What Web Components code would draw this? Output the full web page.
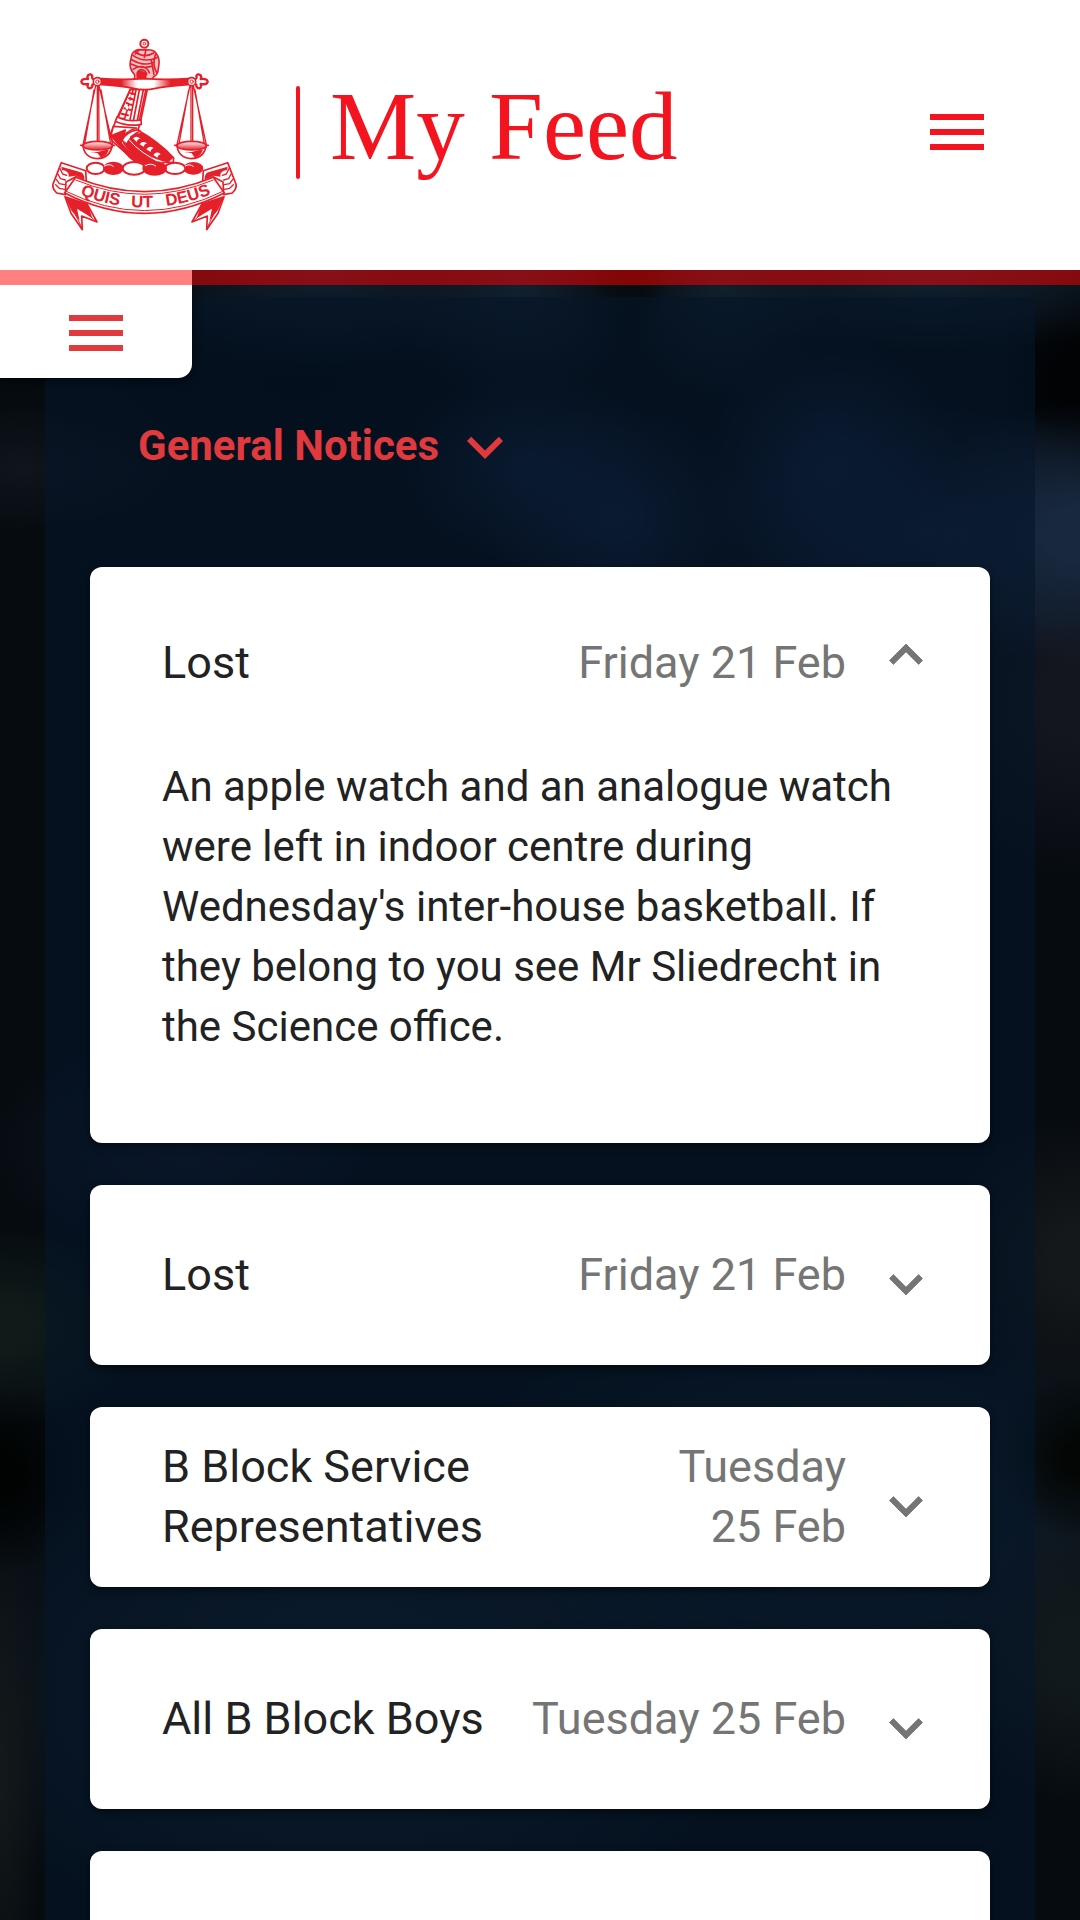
<!DOCTYPE html>
<html lang="en">
<head>
<meta charset="utf-8">
<meta name="viewport" content="width=device-width, initial-scale=1">
<title>My Feed</title>
<style>
  body { margin: 0; background: #05090d; font-family: Roboto, "Noto Sans", sans-serif; }
</style>
</head>
<body>
<feed-app>
  <app-header slot="header">My Feed</app-header>
  <notice-group>
    <span slot="heading">General Notices</span>
    <notice-card open>
      <span slot="title">Lost</span>
      <span slot="date">Friday 21 Feb</span>
      <p style="margin:0">An apple watch and an analogue watch were left in indoor centre during Wednesday's inter-house basketball. If they belong to you see Mr Sliedrecht in the Science office.</p>
    </notice-card>
    <notice-card>
      <span slot="title">Lost</span>
      <span slot="date">Friday 21 Feb</span>
    </notice-card>
    <notice-card>
      <span slot="title">B Block Service Representatives</span>
      <span slot="date">Tuesday 25 Feb</span>
    </notice-card>
    <notice-card>
      <span slot="title">All B Block Boys</span>
      <span slot="date">Tuesday 25 Feb</span>
    </notice-card>
    <notice-card></notice-card>
  </notice-group>
</feed-app>

<script>
function define(name, html, setup) {
  const template = document.createElement('template');
  template.innerHTML = html;
  customElements.define(name, class extends HTMLElement {
    constructor() {
      super();
      this.attachShadow({ mode: 'open' }).append(template.content.cloneNode(true));
    }
    connectedCallback() { if (setup) setup(this, this.shadowRoot); }
  });
}

define('menu-button', `
<style>
  :host { display: block; }
  button { display: block; margin: 0; padding: 0; border: 0; background: none; color: inherit; cursor: pointer; }
  svg { display: block; width: 72px; height: 72px; fill: currentColor; }
</style>
<button type="button" aria-label="Menu">
  <svg viewBox="0 0 24 24" aria-hidden="true"><path d="M3 6h18v2H3zM3 11h18v2H3zM3 16h18v2H3z"/></svg>
</button>`);

define('school-crest', `
<style>
  :host { display: block; }
  svg { display: block; width: 185px; height: 198px; }
  text { font: bold 50px "Liberation Sans", Arial, sans-serif; fill: #e5202a; }
</style>
<svg viewBox="66 39 555 594" fill="none" stroke="#e5202a" stroke-width="5" stroke-linejoin="round" stroke-linecap="round">
  <defs>
    <linearGradient id="beam">
      <stop offset="0" stop-color="#e5202a"/><stop offset=".25" stop-color="#e5202a"/>
      <stop offset=".42" stop-color="#fff"/><stop offset=".6" stop-color="#fff"/>
      <stop offset=".78" stop-color="#e5202a"/><stop offset="1" stop-color="#e5202a"/>
    </linearGradient>
    <linearGradient id="bowl" x1="0" y1="1" x2="0" y2="0">
      <stop offset="0" stop-color="#e5202a"/><stop offset="1" stop-color="#fff"/>
    </linearGradient>
  </defs>
  <!-- gauntlet -->
  <path d="M312 178Q318 166 309 158Q298 144 301 124L306 103Q312 91 327 89L362 90Q374 91 379 101Q389 114 387 132L384 153Q382 166 370 171L367 180Z" fill="#f9c4c7"/>
  <path d="M316 96Q343 116 371 99M309 106Q344 130 380 113M305 119Q340 139 368 128M303 132Q334 148 364 139M309 148Q326 136 341 141Q354 146 358 158M322 173Q318 151 333 149Q347 150 350 162M376 104Q366 132 380 158M364 120L372 164M327 90L316 102M348 88L343 112" stroke-width="5"/>
  <path d="M320 157Q336 146 352 162L348 176H322Z" fill="#e5202a" stroke="none"/>
  <circle cx="343" cy="71" r="12" fill="#fff" stroke-width="6"/><circle cx="343" cy="71" r="4" stroke-width="3"/>
  <!-- arm -->
  <path d="M301 208L262 292L254 311L240 345L248 364L323 431L430 426L431 414Q388 367 324 331L331 307L352 208Z" fill="#fff"/>
  <path d="M301 208L264 294L284 296L310 208ZM318 210L300 299M328 210L310 303M340 210L321 306M347 212L327 306" stroke-width="5"/>
  <path d="M302 220L315 223M297 235L312 239M290 249L306 255M283 265L301 270M275 281L294 286" stroke-width="6"/>
  <path d="M304 224l7 2-3 8-7-3zM298 241l7 2-3 8-7-3zM290 257l7 3-4 9-6-3z" fill="#fff" stroke="none"/>
  <path d="M262 290Q290 307 333 300L334 313Q292 321 256 304Z" fill="#fff"/>
  <path d="M250 319L320 324Q281 333 270 369L243 346Z" fill="#fff"/>
  <path d="M243 347L286 330L273 369L292 391L319 426L300 413Z" fill="#e5202a"/>
  <path d="M281 368L322 425L382 430L326 378Q307 357 300 352Z" fill="#e5202a"/>
  <path d="M276 361Q286 337 323 329L330 333Q300 348 290 373Z" fill="#fff"/>
  <path d="M303 350Q319 341 337 341Q387 373 428 412L414 424Q379 420 345 397Q312 373 303 350Z" fill="#e5202a"/>
  <path d="M309 355q10-10 22 1-9 1-11 10zM329 373q8-13 22-3-9 2-10 10zM349 388q8-13 22-4-9 3-9 12zM370 405q9-13 22-3-9 3-10 11z" fill="#fff" stroke="none"/>
  <path d="M297 359Q331 401 397 430" stroke="#fff" stroke-width="3"/>
  <!-- beam -->
  <path d="M203 175Q280 181 343 176Q410 181 484 175V193Q405 199 377 205Q343 213 310 205Q277 197 203 193Z" fill="url(#beam)"/>
  <path d="M192 178Q184 176 187 168Q183 160 175 165Q170 171 174 177Q155 175 154 185Q155 195 174 192Q170 202 178 205Q188 204 187 194L193 192ZM494 178Q502 176 499 168Q503 160 511 165Q516 171 512 177Q532 175 533 185Q531 195 512 192Q516 202 508 205Q498 204 499 194L493 192Z" fill="#fff" stroke-width="7"/>
  <circle cx="202" cy="185" r="12" fill="#fff" stroke-width="5"/><circle cx="202" cy="185" r="5" stroke-width="3"/>
  <circle cx="485" cy="185" r="12" fill="#fff" stroke-width="5"/><circle cx="485" cy="185" r="5" stroke-width="3"/>
  <!-- scales -->
  <path d="M197 197L159 374M192 210L164 372M202 197V368M206 197L207 368M207 197L248 374M213 210L242 372M480 197L441 374M476 210L447 372M483 197V368M488 197V368M490 197L529 374M495 210L523 372" stroke-width="4"/>
  <path d="M159 375Q162 414 202 416Q241 414 247 375Z" fill="#fff"/>
  <path d="M168 390Q187 402 214 393L237 388Q230 411 212 412L202 399Q184 400 168 390Z" fill="#e5202a" stroke="none"/>
  <ellipse cx="203" cy="377" rx="44" ry="13" fill="url(#bowl)"/>
  <path d="M441 375Q444 414 484 416Q523 414 529 375Z" fill="#fff"/>
  <path d="M450 390Q469 402 496 393L519 388Q512 411 494 412L484 399Q466 400 450 390Z" fill="#e5202a" stroke="none"/>
  <ellipse cx="485" cy="377" rx="44" ry="13" fill="url(#bowl)"/>
  <path d="M159 376h-7M248 376h6M441 376h-7M529 376h6"/>
  <!-- wreath -->
  <g stroke-width="6">
    <ellipse cx="197" cy="445" rx="27" ry="17" fill="#fff"/>
    <ellipse cx="250" cy="445" rx="28" ry="17" fill="#e5202a"/>
    <ellipse cx="490" cy="445" rx="27" ry="16" fill="#e5202a"/>
    <ellipse cx="312" cy="445" rx="34" ry="19" fill="#fff"/>
    <ellipse cx="435" cy="445" rx="31" ry="17" fill="#fff"/>
    <ellipse cx="374" cy="445" rx="34" ry="19" fill="#e5202a"/>
  </g>
  <path d="M223 438q17-9 27 1M346 437q17-10 31 1M466 438q12-8 24 1" stroke="#fff" stroke-width="3"/>
  <!-- ribbon -->
  <path d="M105 530L123 580L157 629L155 588L201 606L171 552ZM582 530L564 580L530 629L532 588L486 606L516 552Z" fill="#fff"/>
  <path d="M105 530L123 570L149 602L141 566L187 594L173 552ZM582 530L564 570L538 602L546 566L500 594L514 552Z" fill="#e5202a" stroke="none"/>
  <path d="M120 550L155 622M140 555L196 602M567 550L532 622M547 555L491 602" stroke-width="3"/>
  <path d="M94 428L167 452L169 485L138 470L108 486L106 524L80 519Q62 503 72 485ZM593 428L520 452L518 485L549 470L579 486L581 524L607 519Q625 503 615 485Z" fill="#fff"/>
  <path d="M94 440L150 456Q164 459 163 479L137 467L116 470Q119 453 96 450ZM593 440L537 456Q523 459 524 479L550 467L571 470Q568 453 591 450Z" fill="#e5202a" stroke="none"/>
  <path d="M90 446L98 462L110 466M84 462L91 476L106 480M79 478L88 491L104 494M77 494L88 505L104 508M597 446L589 462L577 466M603 462L596 476L581 480M608 478L599 491L583 494M610 494L599 505L583 508" stroke-width="4"/>
  <path d="M137 472Q343 558 550 472L583 519Q343 641 104 519Z" fill="#fff"/>
  <path d="M137 480Q343 566 550 480M106 513Q343 631 581 513" stroke-width="3"/>
  <path id="motto" d="M139 519Q343 607 559 516" stroke="none"/>
  <text stroke="none" text-anchor="middle"><textPath href="#motto" startOffset="17%">QUIS</textPath></text>
  <text stroke="none" text-anchor="middle"><textPath href="#motto" startOffset="47%">UT</textPath></text>
  <text stroke="none" text-anchor="middle"><textPath href="#motto" startOffset="80%">DEUS</textPath></text>
</svg>`);

define('app-header', `
<style>
  :host { display: block; background: #fff; color: #f3141f; }
  header { display: flex; align-items: center; box-sizing: border-box; height: 270px; padding: 0 87px 6px 52px; }
  .rule { width: 4px; height: 93px; margin: 0 30px 0 59px; border-radius: 2px; background: currentColor; }
  h1 { flex: 1; margin: 0; padding-bottom: 10px; font: 400 97px/120px "Liberation Serif", "Times New Roman", serif; white-space: nowrap; }
</style>
<header>
  <school-crest></school-crest>
  <span class="rule"></span>
  <h1><slot></slot></h1>
  <menu-button></menu-button>
</header>`);

define('feed-app', `
<style>
  :host { display: flex; flex-direction: column; height: 100vh; overflow: hidden; }
  main {
    flex: 1; min-height: 0; position: relative; overflow: hidden auto; scrollbar-width: none;
    background:
      radial-gradient(ellipse 16% 8% at 100% 16%, #18283d 20%, transparent),
      radial-gradient(ellipse 12% 7% at 57% 15%, #13233f, transparent),
      radial-gradient(ellipse 12% 6% at 49% 12%, #11203a, transparent),
      radial-gradient(ellipse 12% 8% at 77% 12%, #12233f, transparent),
      radial-gradient(ellipse 22% 8% at 86% 16%, #13233f, transparent),
      radial-gradient(ellipse 12% 7% at 48% 1%, #12202f, transparent),
      radial-gradient(ellipse 5% 5% at 57% 0%, #030505, transparent),
      radial-gradient(ellipse 10% 7% at 67% 1%, #11202c, transparent),
      radial-gradient(ellipse 20% 6% at 30% 0%, #11202f, transparent),
      radial-gradient(ellipse 24% 5% at 86% 0%, #122433, transparent),
      radial-gradient(ellipse 8% 7% at 100% 7%, #010305 30%, transparent),
      radial-gradient(ellipse 26% 6% at 28% 7%, #02070b, transparent),
      radial-gradient(ellipse 16% 4% at 2% 12%, #10151c, transparent),
      radial-gradient(ellipse 18% 11% at 100% 26%, #14161e 20%, transparent),
      radial-gradient(ellipse 18% 7% at 17% 53%, #12192a, transparent),
      radial-gradient(ellipse 14% 6% at 0% 64%, #101b19 20%, transparent),
      radial-gradient(ellipse 8% 6% at 0% 73%, #010302 20%, transparent),
      radial-gradient(ellipse 8% 5% at 100% 72%, #030604 20%, transparent),
      radial-gradient(ellipse 14% 9% at 100% 60%, #15181a 20%, transparent),
      radial-gradient(ellipse 14% 9% at 100% 84%, #12191c 20%, transparent),
      radial-gradient(ellipse 4% 16% at 0% 91%, #13181a 10%, transparent),
      radial-gradient(ellipse 40% 16% at 32% 86%, #162734, transparent),
      radial-gradient(ellipse 40% 14% at 78% 76%, #132331, transparent),
      #060b10;
  }
  .bar { height: 15px; background: rgba(255, 0, 0, .5); }
  .tab {
    position: absolute; z-index: 1; top: 15px; left: 0; padding: 12px 60px 9px;
    background: #fff; color: #e0393e; border-radius: 0 0 14px 0; box-shadow: 0 3px 9px rgba(0, 0, 0, .5);
    clip-path: inset(0 -20px -20px 0);
  }
  .corner { position: absolute; top: 0; left: 0; width: 192px; height: 15px; background: #ff8080; }
  .content { padding: 12px 45px 0; }
</style>
<slot name="header"></slot>
<main>
  <div class="bar"></div>
  <div class="corner"></div>
  <nav class="tab"><menu-button></menu-button></nav>
  <div class="content"><slot></slot></div>
</main>`);

define('notice-group', `
<style>
  :host { display: block; padding: 108px 45px 42px; border-radius: 12px; background: rgba(5, 22, 42, .6); }
  h2 { margin: 0 0 78px; font: inherit; }
  button {
    display: flex; align-items: center; gap: 10px; height: 84px; margin: 0; padding: 0 48px; border: 0;
    background: none; color: #e0393e; font: 700 42px/60px Roboto, sans-serif; cursor: pointer;
  }
  slot[name] { display: block; padding-bottom: 3px; }
  svg { display: block; width: 72px; height: 72px; fill: currentColor; }
  .list { display: flex; flex-direction: column; gap: 42px; }
</style>
<h2><button type="button" aria-haspopup="true">
  <slot name="heading"></slot>
  <svg viewBox="0 0 24 24" aria-hidden="true"><path d="M7.41 8.58L12 13.17l4.59-4.59L18 10l-6 6-6-6z"/></svg>
</button></h2>
<div class="list"><slot></slot></div>`);

define('notice-card', `
<style>
  :host { display: block; border-radius: 12px; background: #fff; color: #222; box-shadow: 0 3px 9px rgba(0, 0, 0, .5); }
  button {
    display: flex; align-items: center; box-sizing: border-box; width: 100%; min-height: 180px; margin: 0;
    padding: 0 51px 0 72px; border: 0; background: none; color: inherit;
    font: 400 45px/60px Roboto, sans-serif; text-align: left; cursor: pointer;
  }
  :host([open]) button { min-height: 192px; }
  .title { flex: 0 1 auto; margin-right: auto; }
  .date { flex: 0 1 auto; margin: 0 27px 0 24px; color: #757575; text-align: right; }
  .arrow { flex: none; padding-top: 17px; }
  :host([open]) .arrow { transform: rotate(180deg); }
  svg { display: block; width: 66px; height: 66px; fill: #757575; stroke: #757575; stroke-width: .3; }
  .body { display: none; margin-top: -2px; padding: 0 72px 86px; font-size: 42px; line-height: 60px; }
  :host([open]) .body { display: block; }
</style>
<button type="button" aria-expanded="false">
  <span class="title"><slot name="title"></slot></span>
  <span class="date"><slot name="date"></slot></span>
  <span class="arrow"><svg viewBox="0 0 24 24" aria-hidden="true"><path d="M7.41 8.58L12 13.17l4.59-4.59L18 10l-6 6-6-6z"/></svg></span>
</button>
<div class="body"><slot></slot></div>`, (host, root) => {
  const button = root.querySelector('button');
  button.setAttribute('aria-expanded', host.hasAttribute('open'));
  button.onclick = () => button.setAttribute('aria-expanded', host.toggleAttribute('open'));
});
</script>
</body>
</html>
